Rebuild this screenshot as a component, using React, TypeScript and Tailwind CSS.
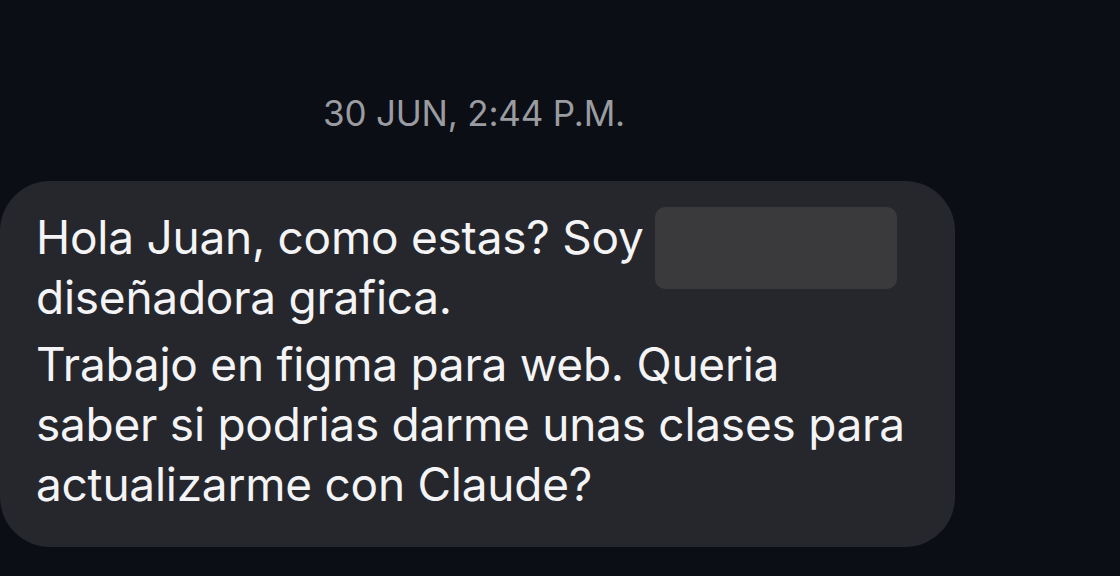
import React from "react";

export default function App() {
  return (
    <div
      className="w-[1120px] h-[576px] bg-[#0b0e15] overflow-hidden flex flex-col"
      style={{ fontFamily: "Inter, 'Noto Sans', sans-serif" }}
    >
      <div className="w-[948px] pt-[92px] text-center text-[35px] leading-[42px] text-[#9b9ca1] tracking-[-0.2px]">
        30 JUN, 2:44 P.M.
      </div>
      <div className="relative mt-[47px] w-[955px] h-[366px] rounded-[50px] bg-[#25272d] pl-[36px] pt-[26px] text-[#f4f4f6] text-[46px] leading-[60px] tracking-[-0.25px]">
        <p>
          Hola Juan, como estas? Soy
          <br />
          diseñadora grafica.
        </p>
        <p className="mt-[7px]">
          Trabajo en figma para web. Queria
          <br />
          saber si podrias darme unas clases para
          <br />
          actualizarme con Claude?
        </p>
        <div className="absolute left-[655px] top-[26px] w-[242px] h-[82px] rounded-[10px] bg-[#3a3a3c]" />
      </div>
    </div>
  );
}
